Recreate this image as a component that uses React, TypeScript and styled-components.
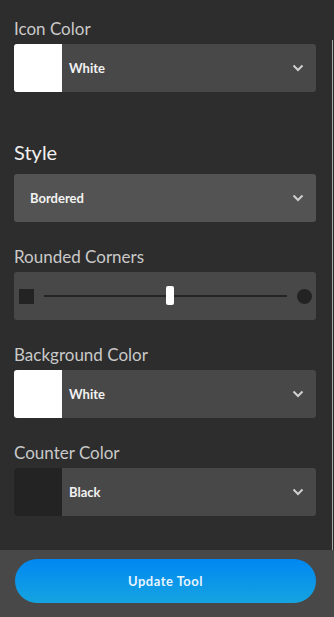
import React from "react";
import styled, { createGlobalStyle } from "styled-components";

const Global = createGlobalStyle`
  html, body { margin: 0; padding: 0; background: #2d2d2d; }
  body { font-family: Lato, "Open Sans", sans-serif; }
`;

const Page = styled.div`
  position: relative;
  width: 334px;
  height: 617px;
  display: flex;
  flex-direction: column;
  background: #2d2d2d;
  overflow: hidden;
`;

const Scroll = styled.div`
  position: absolute;
  right: 1px;
  top: 40px;
  width: 1px;
  height: 510px;
  background: #a8a8a8;
`;

const Content = styled.div`
  flex: 1;
  display: flex;
  flex-direction: column;
  gap: 24px;
  padding: 18px 18px 0 14px;
`;

const Section = styled.div<{ $extra?: number }>`
  display: flex;
  flex-direction: column;
  margin-top: ${(p) => p.$extra ?? 0}px;
`;

const Label = styled.div<{ $big?: boolean }>`
  font-size: ${(p) => (p.$big ? 20 : 17)}px;
  line-height: ${(p) => (p.$big ? 24 : 22)}px;
  color: ${(p) => (p.$big ? "#f0f0f0" : "#c9c9c9")};
  margin-bottom: ${(p) => (p.$big ? 10 : 4)}px;
`;

const Select = styled.div<{ $light?: boolean }>`
  height: 48px;
  border-radius: 3px;
  background: ${(p) => (p.$light ? "#535353" : "#484848")};
  display: flex;
  align-items: center;
  overflow: hidden;
`;

const Swatch = styled.div<{ $color: string }>`
  width: 48px;
  height: 48px;
  background: ${(p) => p.$color};
  flex-shrink: 0;
`;

const Value = styled.div<{ $pad: number }>`
  flex: 1;
  padding-left: ${(p) => p.$pad}px;
  font-size: 13px;
  font-weight: 700;
  color: #f2f2f2;
`;

const Chevron = styled.svg`
  width: 12px;
  height: 8px;
  margin-right: 12px;
`;

const SliderBox = styled.div`
  height: 48px;
  border-radius: 3px;
  background: #484848;
  display: flex;
  align-items: center;
  padding: 0 4px 0 5px;
  gap: 10px;
`;

const Square = styled.div`
  width: 15px;
  height: 15px;
  background: #232323;
  flex-shrink: 0;
`;

const Circle = styled.div`
  width: 15px;
  height: 15px;
  border-radius: 50%;
  background: #232323;
  flex-shrink: 0;
`;

const Track = styled.div`
  position: relative;
  flex: 1;
  height: 2px;
  background: #252525;
`;

const Thumb = styled.div`
  position: absolute;
  top: -9px;
  width: 8px;
  height: 19px;
  border-radius: 2px;
  background: #ffffff;
`;

const Footer = styled.div`
  height: 67px;
  background: #484848;
  padding: 9px 18px 0 15px;
  box-sizing: border-box;
`;

const Button = styled.button`
  width: 100%;
  height: 44px;
  border: none;
  border-radius: 22px;
  background: linear-gradient(180deg, #0087f2 0%, #15a4e0 100%);
  color: #e6f4ff;
  font-family: Lato, sans-serif;
  font-size: 13px;
  font-weight: 700;
  letter-spacing: 0.5px;
`;

const Down = () => (
  <Chevron viewBox="0 0 12 8">
    <path d="M1.5 1.5 L6 6 L10.5 1.5" fill="none" stroke="#cfcfcf" strokeWidth="2" />
  </Chevron>
);

const ColorSelect = ({ color, name }: { color: string; name: string }) => (
  <Select>
    <Swatch $color={color} />
    <Value $pad={7}>{name}</Value>
    <Down />
  </Select>
);

export default function App() {
  return (
    <Page>
      <Global />
      <Content>
        <Section>
          <Label>Icon Color</Label>
          <ColorSelect color="#ffffff" name="White" />
        </Section>
        <Section $extra={24}>
          <Label $big>Style</Label>
          <Select $light>
            <Value $pad={16}>Bordered</Value>
            <Down />
          </Select>
        </Section>
        <Section>
          <Label>Rounded Corners</Label>
          <SliderBox>
            <Square />
            <Track>
              <Thumb style={{ left: "50%" }} />
            </Track>
            <Circle />
          </SliderBox>
        </Section>
        <Section>
          <Label>Background Color</Label>
          <ColorSelect color="#ffffff" name="White" />
        </Section>
        <Section>
          <Label>Counter Color</Label>
          <ColorSelect color="#232323" name="Black" />
        </Section>
      </Content>
      <Footer>
        <Button>Update Tool</Button>
      </Footer>
      <Scroll />
    </Page>
  );
}
